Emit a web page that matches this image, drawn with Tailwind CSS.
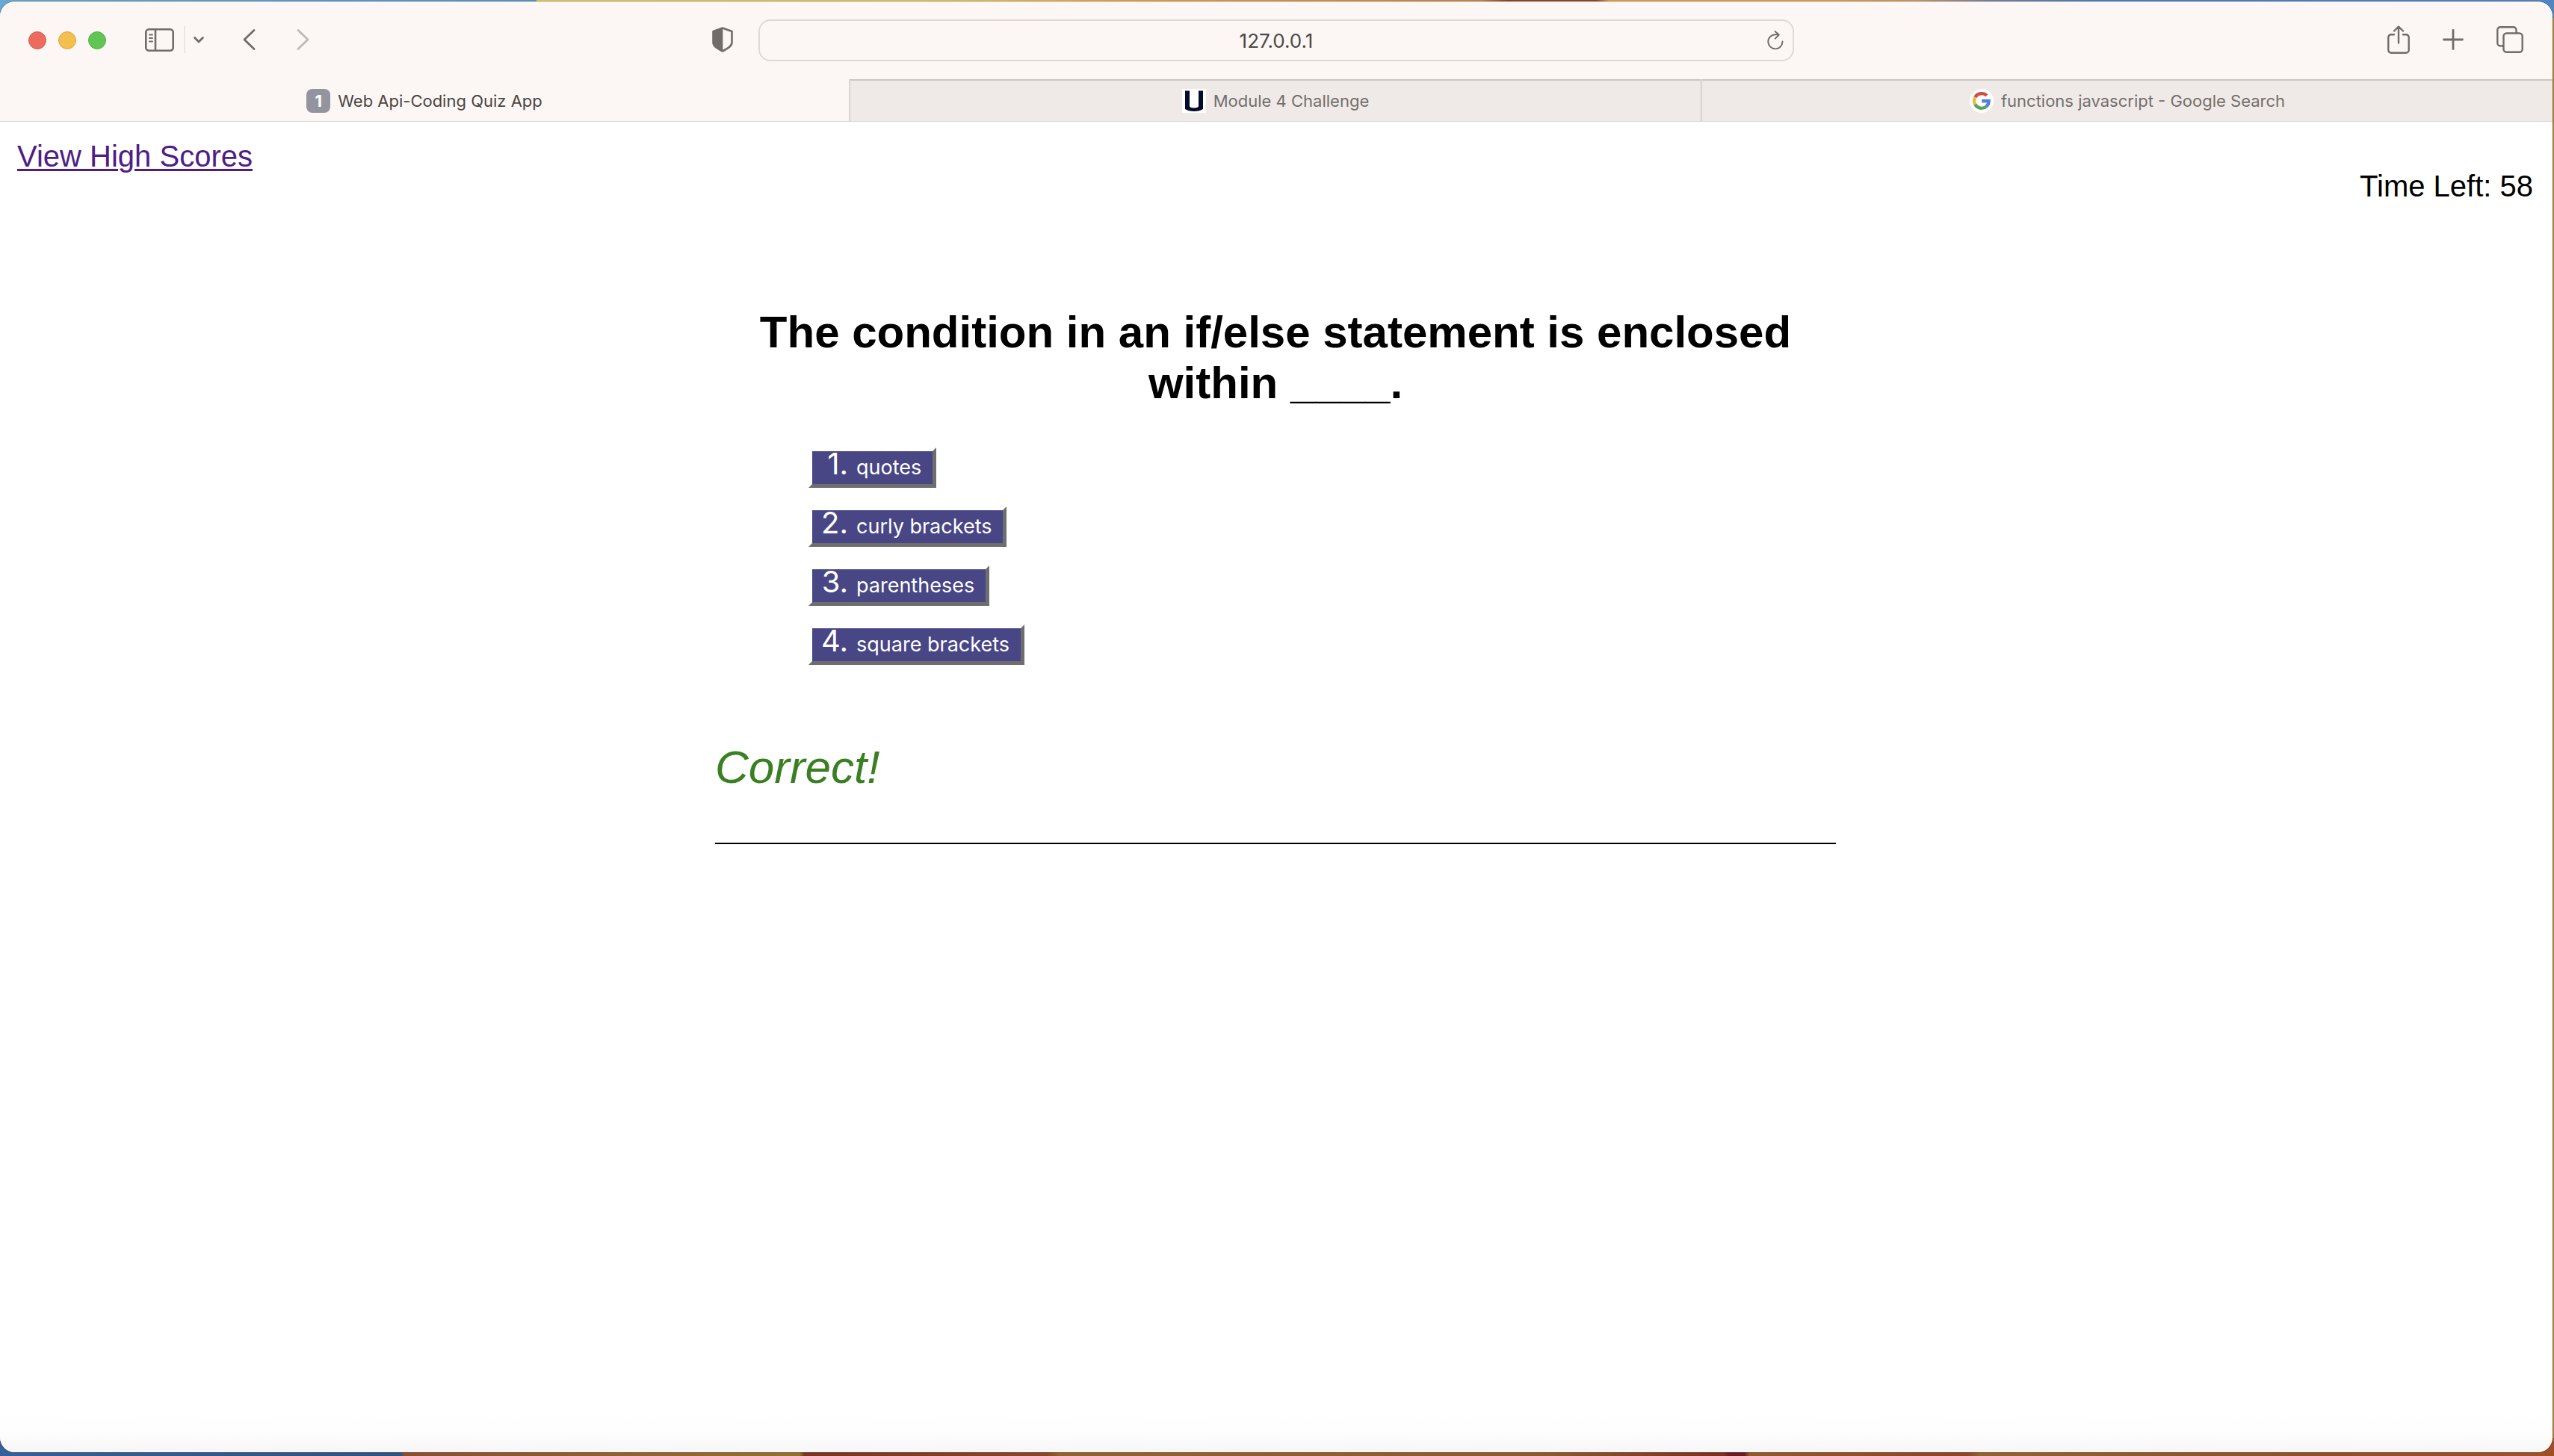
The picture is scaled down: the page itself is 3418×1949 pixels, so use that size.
<!DOCTYPE html>
<html lang="en">
<head>
<meta charset="utf-8">
<meta name="viewport" content="width=device-width, initial-scale=1">
<title>Web Api-Coding Quiz App</title>
<script src="https://cdn.jsdelivr.net/npm/@tailwindcss/browser@4"></script>
</head>
<body class="flex min-h-screen flex-col pt-[2px] pr-[2px] pb-[5px] font-['Liberation_Sans',Arial,sans-serif] text-black [background:linear-gradient(to_right,#6aa8d4,#5896c6_21%,#dcc965_21%,#dcc063_38%,#e0a050_44%,#c08a48_58%,#8a4a28_59%,#8a4a28_62.5%,#d8a252_63%,#d8a252_72%,#c89868_75%,#77809c_78%,#4c7fbc_82%,#5086c4)_top/100%_24px_no-repeat,linear-gradient(to_right,#375f99,#2f527f_15.7%,#8c4d30_15.8%,#966f30_31.3%,#7c3320_31.5%,#8a4628_41%,#93612f_41.5%,#8f5a2e_60%,#7c2f20_67.5%,#6a1c22_67.7%,#6a1c22_68.3%,#94582e_68.5%,#8e4426_77%,#93622f_77.5%,#8e5029_90%,#a04e28)_bottom/100%_24px_no-repeat,#b5873f]">

<div class="flex flex-1 flex-col overflow-hidden rounded-[20px] bg-white shadow-[0_0_0_1px_rgba(0,0,0,0.25)]">

  <!-- Toolbar -->
  <div class="grid h-26 grid-cols-[1fr_1386px_1fr] items-center bg-[#fcf7f4] text-[#716c69]">
    <div class="flex items-center pr-[34px] pl-[38px]">
      <div class="flex gap-4">
        <button aria-label="Close" class="size-6 rounded-full border border-[#d65a50] bg-[#ed6a5e]"></button>
        <button aria-label="Minimize" class="size-6 rounded-full border border-[#d9a842] bg-[#f4bf4f]"></button>
        <button aria-label="Zoom" class="size-6 rounded-full border border-[#52b143] bg-[#61c554]"></button>
      </div>
      <div class="flex flex-1 items-center pb-[2px]">
        <button aria-label="Sidebar" class="ml-[52px]">
          <svg class="block h-[31px] w-[39px]" viewBox="0 0 39 31" fill="none" stroke="currentColor" stroke-width="2.6" stroke-linecap="round">
            <rect x="1.3" y="1.3" width="36.4" height="28.4" rx="4"/>
            <path d="M14 1.5v28"/><path d="M6 8.500h4M6 13h4M6 17.500h4" stroke-width="1.9"/>
          </svg>
        </button>
        <div class="ml-[13px] h-9 w-[2px] bg-[#ebe6e3]"></div>
        <button aria-label="Tab groups" class="ml-[11px]">
          <svg class="block h-[9px] w-[14px]" viewBox="0 0 14 9" fill="none" stroke="currentColor" stroke-width="2.8" stroke-linecap="round" stroke-linejoin="round"><path d="M1.600 1.600 7 7l5.400-5.400"/></svg>
        </button>
        <button aria-label="Back" class="ml-[52px]">
          <svg class="block h-[30px] w-[17px]" viewBox="0 0 17 30" fill="none" stroke="currentColor" stroke-width="2.800" stroke-linecap="round" stroke-linejoin="round"><path d="M15 2.500 2 15l13 12.500"/></svg>
        </button>
        <button aria-label="Forward" class="ml-[55px] text-[#bfbab7]">
          <svg class="block h-[30px] w-[17px]" viewBox="0 0 17 30" fill="none" stroke="currentColor" stroke-width="2.800" stroke-linecap="round" stroke-linejoin="round"><path d="M2 2.500 15 15 2 27.500"/></svg>
        </button>
        <button aria-label="Privacy report" class="ml-auto">
          <svg class="block h-[34px] w-[28px]" viewBox="0 0 28 34" fill="none">
            <path d="M14 1.500 26.500 6v15c0 5-6.500 8.500-12.500 11.500C8 29.500 1.500 26 1.500 21V6z" stroke="currentColor" stroke-width="2.600" stroke-linejoin="round"/>
            <path d="M14.300 1v31.500C8 29.500 1.500 26 1.500 21V6z" fill="currentColor"/>
          </svg>
        </button>
      </div>
    </div>

    <div class="flex h-14 items-center rounded-2xl border-2 border-[#ddd9d6] pr-3 pl-[34px]">
      <input aria-label="Address" type="text" value="127.0.0.1" class="h-full min-w-0 flex-1 bg-transparent text-center font-[Inter,sans-serif] text-[26px] text-[#4c4846] outline-none">
      <button aria-label="Reload">
        <svg class="block h-[26px] w-[22px]" viewBox="0 0 22 26" fill="none" stroke="currentColor" stroke-width="1.900" stroke-linecap="round" stroke-linejoin="round"><path d="M20.500 14.500A9.600 9.600 0 1 1 11 5.200h4.500M10.500 1 15.800 5.500l-5 5.200"/></svg>
      </button>
    </div>

    <div class="flex items-center justify-end pr-[39px] pb-[2px]">
      <button aria-label="Share">
        <svg class="block h-[38px] w-[30px]" viewBox="0 0 30 38" fill="none" stroke="currentColor" stroke-width="2.400" stroke-linecap="round" stroke-linejoin="round"><path d="M9 12.300H5a3.700 3.700 0 0 0-3.700 3.700v17A3.700 3.700 0 0 0 5 36.700h20a3.700 3.700 0 0 0 3.700-3.700V16a3.700 3.700 0 0 0-3.700-3.700h-4M15 23.500V2M9 7.500 15 1.700l6 5.800"/></svg>
      </button>
      <button aria-label="New tab" class="ml-11">
        <svg class="block size-[28px]" viewBox="0 0 28 28" fill="none" stroke="currentColor" stroke-width="2.800" stroke-linecap="round"><path d="M14 1.500v25M1.500 14h25"/></svg>
      </button>
      <button aria-label="Tab overview" class="ml-11">
        <svg class="block size-[36px]" viewBox="0 0 36 36" fill="none" stroke="currentColor" stroke-width="2.400" stroke-linejoin="round"><rect x="9.500" y="9.500" width="25.200" height="25.200" rx="4"/><path d="M9.500 26.500H5.200a3.900 3.900 0 0 1-3.900-3.900V5.200a3.900 3.900 0 0 1 3.900-3.900h17.400a3.900 3.900 0 0 1 3.900 3.900v4.300"/></svg>
      </button>
    </div>
  </div>

  <!-- Tabs -->
  <nav class="grid h-[57px] grid-cols-[1136fr_1140fr_1140fr] border-b border-[#d6d6d6] font-[Inter,sans-serif] text-[22px] leading-7 text-[#736e6b]">
    <a href="#" class="flex items-center justify-center gap-2.5 bg-[#fcf7f4] pt-[2px] text-[#4a4542]">
      <span class="flex size-8 items-center justify-center rounded-lg bg-[#9394a0] font-bold text-white">1</span>
      Web Api-Coding Quiz App
    </a>
    <a href="#" class="flex items-center justify-center gap-2.5 border-l-2 border-[#d9d5d2] bg-[#efeae7] pt-[2px] shadow-[inset_0_2px_1px_#c9c5c2]">
      <svg class="size-8" viewBox="0 0 32 32"><path fill="#fff" d="M0 0h32v32H0z"/><path fill="#050b2c" d="M4 2.500h6v20.300c0 2 2 2.700 6 2.700s6-.7 6-2.700V2.500h6V27c-3 2-7 3-12 3s-9-1-12-3z"/></svg>
      Module 4 Challenge
    </a>
    <a href="#" class="flex items-center justify-center gap-2.5 border-l-2 border-[#d9d5d2] bg-[#efeae7] pt-[2px] shadow-[inset_0_2px_1px_#c9c5c2]">
      <svg class="size-8" viewBox="0 0 32 32" fill="none" stroke-width="4.400"><circle cx="16" cy="16" r="16" fill="#fff"/><path stroke="#d0503f" d="M22.900 8.900A9.900 9.900 0 0 0 7.300 11.300"/><path stroke="#edbb40" d="M7.300 11.300a9.900 9.900 0 0 0 0 9.400"/><path stroke="#55a45c" d="M7.300 20.700a9.900 9.900 0 0 0 15 2.900"/><path stroke="#5080e0" d="M22.300 23.600a9.900 9.900 0 0 0 3.300-7.400H16.200"/></svg>
      functions javascript - Google Search
    </a>
  </nav>

  <!-- Quiz page -->
  <div class="flex-1 bg-[linear-gradient(to_top,#f6f6f6,#fdfdfd_24px,#ffffff_60px)] pr-[2px] text-[40px] leading-[46px]">
    <header class="flex items-start justify-between pt-[23px] pr-6 pl-[23px]">
      <a href="#" class="text-[#4f1d87] underline decoration-[3px] underline-offset-[3px]">View High Scores</a>
      <p class="mt-10">Time Left: 58</p>
    </header>
    <main class="mx-auto mt-[139px] w-[1500px] max-w-full">
      <h1 class="px-12 text-center text-[60px] leading-[68px] font-bold">The condition in an if/else statement is enclosed within ____.</h1>
      <ol class="mt-[52px] flex flex-col items-start gap-[25px] pl-[125px] font-[Inter,sans-serif] text-[27px] leading-8 text-white">
        <li><button class="flex h-[54px] items-baseline border-5 border-t-white border-r-[#6e6e6e] border-b-[#6e6e6e] border-l-white bg-[#484685] pr-[15px] pl-3"><span class="w-9 text-right text-[40px] leading-[34px]">1.</span><span class="ml-[11px]">quotes</span></button></li>
        <li><button class="flex h-[54px] items-baseline border-5 border-t-white border-r-[#6e6e6e] border-b-[#6e6e6e] border-l-white bg-[#484685] pr-[15px] pl-3"><span class="w-9 text-right text-[40px] leading-[34px]">2.</span><span class="ml-[11px]">curly brackets</span></button></li>
        <li><button class="flex h-[54px] items-baseline border-5 border-t-white border-r-[#6e6e6e] border-b-[#6e6e6e] border-l-white bg-[#484685] pr-[15px] pl-3"><span class="w-9 text-right text-[40px] leading-[34px]">3.</span><span class="ml-[11px]">parentheses</span></button></li>
        <li><button class="flex h-[54px] items-baseline border-5 border-t-white border-r-[#6e6e6e] border-b-[#6e6e6e] border-l-white bg-[#484685] pr-[15px] pl-3"><span class="w-9 text-right text-[40px] leading-[34px]">4.</span><span class="ml-[11px]">square brackets</span></button></li>
      </ol>
      <p class="mt-[102px] text-[62px] leading-[70px] text-[#3a8023] italic">Correct!</p>
      <hr class="mt-[66px] border-t-2 border-black">
    </main>
  </div>
</div>
</body>
</html>
